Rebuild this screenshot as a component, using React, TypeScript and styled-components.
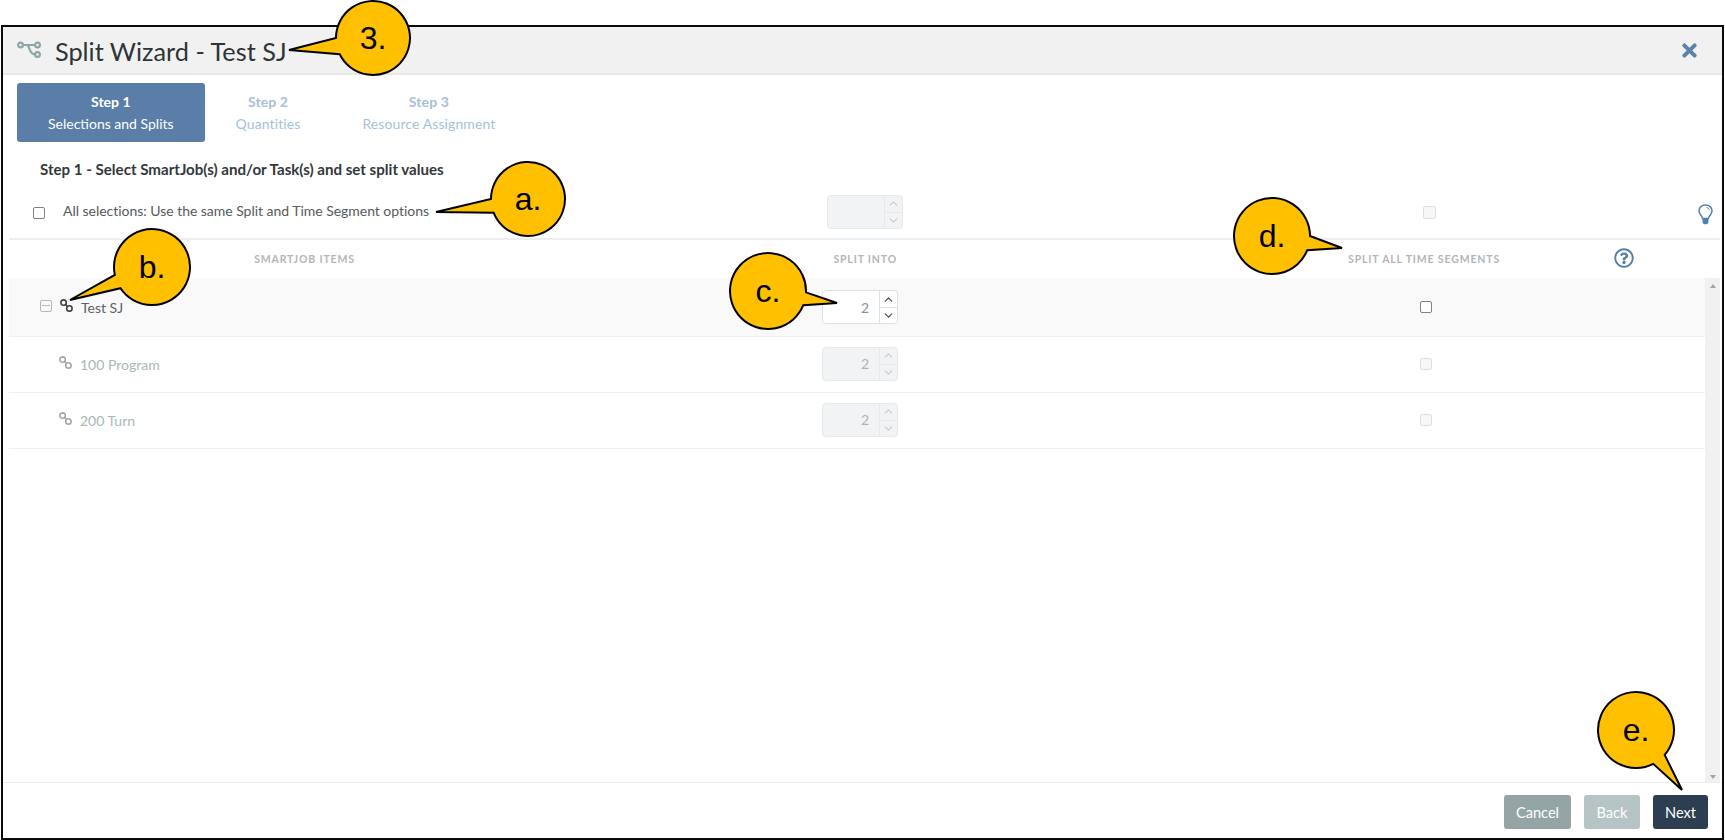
import React from "react";
import styled, { createGlobalStyle } from "styled-components";
import { FaTimes, FaRegQuestionCircle } from "react-icons/fa";
import { ChevronUp, ChevronDown } from "lucide-react";

const Global = createGlobalStyle`
  html, body { margin: 0; padding: 0; height: 840px; overflow: hidden; background: #fff; }
  body { font-family: Lato, "Liberation Sans", sans-serif; }
  * { box-sizing: border-box; }
`;

const Page = styled.div`
  position: relative;
  width: 1725px;
  height: 840px;
  padding: 25px 1px 0 1px;
`;

const Frame = styled.div`
  height: 815px;
  border: 2px solid #0a0a0a;
  display: flex;
  flex-direction: column;
  background: #fff;
`;

const Header = styled.header`
  height: 48px;
  flex: none;
  display: flex;
  align-items: center;
  padding: 0 22px 0 14px;
  background: #f1f1f1;
  border-bottom: 2px solid #e8e8e8;
`;

const Title = styled.h1`
  margin: 1px 0 0 14px;
  font-size: 25.3px;
  font-weight: 400;
  color: #2f3436;
  flex: 1;
`;

const CloseIcon = styled(FaTimes)`
  color: #5a82ab;
  font-size: 21px;
`;

const Steps = styled.nav`
  flex: none;
  display: flex;
  padding: 8px 0 0 14px;
`;

const Step = styled.div<{ $active?: boolean }>`
  height: 59px;
  padding: 0 31px;
  display: flex;
  flex-direction: column;
  align-items: center;
  justify-content: center;
  gap: 4px;
  border-radius: 3px;
  font-size: 14px;
  line-height: 18px;
  letter-spacing: ${(p) => (p.$active ? "0" : "0.1px")};
  background: ${(p) => (p.$active ? "#5a7ea8" : "transparent")};
  color: ${(p) => (p.$active ? "#ffffff" : "#a7bfd8")};
  b { font-weight: 700; }
`;

const Heading = styled.h2`
  flex: none;
  margin: 0;
  height: 43px;
  padding: 18px 0 0 37px;
  font-size: 15.1px;
  line-height: 18px;
  font-weight: 700;
  color: #33393b;
`;

const AllRow = styled.div`
  flex: none;
  height: 55px;
  margin-left: 6px;
  margin-right: 2px;
  border-bottom: 2px solid #eceff2;
  display: grid;
  grid-template-columns: 818px 76px 520px 13px 1fr;
  align-items: center;
`;

const AllLabel = styled.label`
  display: flex;
  align-items: center;
  gap: 18px;
  padding-left: 24px;
  font-size: 14px;
  letter-spacing: -0.03px;
  color: #555b5d;
  margin-top: -3px;
`;

const Bulb = styled.svg`
  justify-self: end;
  width: 15px;
  height: 21px;
  margin: 6px 7px 0 0;
`;

const TableHead = styled.div`
  flex: none;
  height: 38px;
  margin-left: 6px;
  display: grid;
  grid-template-columns: 591px 297px 603px 1fr;
  align-items: center;
`;

const HeadCell = styled.div<{ $align: "center" | "right" }>`
  text-align: ${(p) => p.$align};
  font-size: 10.5px;
  font-weight: 700;
  letter-spacing: 0.85px;
  text-transform: uppercase;
  color: #b3b6b8;
  margin-top: -1px;
`;

const HelpIcon = styled(FaRegQuestionCircle)`
  color: #4f7fb0;
  font-size: 20px;
  margin-left: 114px;
  margin-top: -2px;
`;

const Body = styled.div`
  flex: 1;
  min-height: 0;
  display: flex;
  margin-left: 6px;
  margin-right: 2px;
`;

const Rows = styled.div`
  flex: 1;
  min-width: 0;
`;

const Row = styled.div<{ $current?: boolean }>`
  height: ${(p) => (p.$current ? "59px" : "56px")};
  padding-bottom: ${(p) => (p.$current ? "0" : "2px")};
  display: grid;
  grid-template-columns: 813px 76px 522px 12px 1fr;
  align-items: center;
  background: ${(p) => (p.$current ? "#f9f9f9" : "#fff")};
  border-bottom: 1px solid #eef0f1;
`;

const TreeCell = styled.div<{ $child?: boolean }>`
  display: flex;
  align-items: center;
  margin-top: ${(p) => (p.$child ? "2px" : "0")};
  padding-left: ${(p) => (p.$child ? "50px" : "31px")};
  font-size: 14px;
  color: ${(p) => (p.$child ? "#a9b8b8" : "#5c6365")};
`;

const Collapse = styled.span`
  width: 12px;
  height: 12px;
  margin: -3px 8px 0 0;
  border: 1px solid #aebcbc;
  border-radius: 2px;
  display: flex;
  align-items: center;
  justify-content: center;
  &::before { content: ""; width: 8px; height: 1px; background: #aebcbc; }
`;

const LinkSvg = styled.svg<{ $child?: boolean }>`
  width: 13px;
  height: 13px;
  margin: -4px 8px 0 0;
  color: ${(p) => (p.$child ? "#a3a9aa" : "#3d4244")};
  flex: none;
`;

const StepperBox = styled.div<{ $disabled?: boolean }>`
  height: 34px;
  display: grid;
  grid-template-columns: 1fr 18px;
  border: 1px solid ${(p) => (p.$disabled ? "#e4e9ec" : "#dce1e5")};
  border-radius: 4px;
  overflow: hidden;
  background: ${(p) => (p.$disabled ? "#f1f3f5" : "#fff")};
`;

const StepperValue = styled.div<{ $disabled?: boolean }>`
  display: flex;
  align-items: center;
  justify-content: flex-end;
  padding-right: 10px;
  font-size: 14px;
  color: ${(p) => (p.$disabled ? "#a8b3b5" : "#8a9496")};
`;

const Arrows = styled.div<{ $disabled?: boolean }>`
  display: grid;
  grid-template-rows: 1fr 1fr;
  border-left: 1px solid ${(p) => (p.$disabled ? "#e4e9ec" : "#dce1e5")};
  color: ${(p) => (p.$disabled ? "#c3ccd0" : "#3d4446")};
  span {
    display: flex;
    align-items: center;
    justify-content: center;
  }
  span + span { border-top: 1px solid ${(p) => (p.$disabled ? "#e4e9ec" : "#dce1e5")}; }
`;

const Check = styled.span<{ $disabled?: boolean; $size?: number; $drop?: number }>`
  display: block;
  flex: none;
  width: ${(p) => p.$size ?? 12}px;
  height: ${(p) => p.$size ?? 12}px;
  margin-top: ${(p) => p.$drop ?? 0}px;
  border: 1px solid ${(p) => (p.$disabled ? "#dcdfe0" : "#7d8284")};
  border-radius: 2px;
  background: ${(p) => (p.$disabled ? "#f7f7f7" : "#fff")};
`;

const Scrollbar = styled.div`
  flex: none;
  width: 15px;
  background: #f1f1f1;
  display: flex;
  flex-direction: column;
  justify-content: space-between;
  align-items: center;
  padding: 6px 0 3px;
  &::before, &::after { content: ""; width: 0; height: 0; border-left: 3.5px solid transparent; border-right: 3.5px solid transparent; }
  &::before { border-bottom: 4px solid #a3a3a3; }
  &::after { border-top: 4px solid #a3a3a3; }
`;

const Footer = styled.footer`
  flex: none;
  height: 56px;
  border-top: 1px solid #ececec;
  display: flex;
  justify-content: flex-end;
  align-items: flex-start;
  gap: 13px;
  padding: 12px 14px 0 0;
`;

const Button = styled.button<{ $tone: string; $width: number }>`
  height: 34px;
  width: ${(p) => p.$width}px;
  border: 0;
  border-radius: 3px;
  background: ${(p) => p.$tone};
  color: #fff;
  font: 400 14.6px Lato, "Liberation Sans", sans-serif;
`;

const CalloutBox = styled.div<{ $x: number; $y: number; $r: number }>`
  position: absolute;
  left: ${(p) => p.$x - p.$r}px;
  top: ${(p) => p.$y - p.$r}px;
  width: ${(p) => p.$r * 2}px;
  height: ${(p) => p.$r * 2}px;
  display: flex;
  align-items: center;
  justify-content: center;
  font-family: "Liberation Sans", Arial, sans-serif;
  font-size: 32px;
  color: #000;
  svg { position: absolute; inset: 0; overflow: visible; }
  span { position: relative; }
`;

type CalloutProps = { label: string; cx: number; cy: number; r?: number; tip: [number, number]; a1: number; a2: number };

function Callout({ label, cx, cy, r = 37, tip, a1, a2 }: CalloutProps) {
  const pt = (a: number) => [r + r * Math.cos((a * Math.PI) / 180), r + r * Math.sin((a * Math.PI) / 180)];
  const [x1, y1] = pt(a1);
  const [x2, y2] = pt(a2);
  const d = `M${x1} ${y1} A${r} ${r} 0 1 1 ${x2} ${y2} L${tip[0] - cx + r} ${tip[1] - cy + r} Z`;
  return (
    <CalloutBox $x={cx} $y={cy} $r={r}>
      <svg width={r * 2} height={r * 2}>
        <path d={d} fill="#ffc000" stroke="#000" strokeWidth="2" strokeLinejoin="miter" />
      </svg>
      <span>{label}</span>
    </CalloutBox>
  );
}

function LinkIcon({ child }: { child?: boolean }) {
  return (
    <LinkSvg $child={child} viewBox="0 0 13 13" fill="none" stroke="currentColor" strokeWidth="1.6">
      <circle cx="3.6" cy="3.6" r="2.7" />
      <circle cx="9.4" cy="9.4" r="2.7" />
      <path d="M5.5 5.5l2 2" />
    </LinkSvg>
  );
}

function Stepper({ value, disabled }: { value?: string; disabled?: boolean }) {
  return (
    <StepperBox $disabled={disabled}>
      <StepperValue $disabled={disabled}>{value}</StepperValue>
      <Arrows $disabled={disabled}>
        <span><ChevronUp size={13} strokeWidth={2} /></span>
        <span><ChevronDown size={13} strokeWidth={2} /></span>
      </Arrows>
    </StepperBox>
  );
}

const SplitSvg = styled.svg`
  width: 24px;
  height: 18px;
  flex: none;
  color: #8fa6a6;
`;

export default function App() {
  return (
    <Page>
      <Global />
      <Frame>
        <Header>
          <SplitSvg viewBox="0 0 24 18" fill="none" stroke="currentColor" strokeWidth="2.2">
            <circle cx="3.5" cy="4" r="2.4" />
            <circle cx="20.5" cy="4" r="2.4" />
            <circle cx="20.5" cy="13.5" r="2.4" />
            <path d="M6 4h12M10 4c2.5 0 2 9.5 8 9.5" />
          </SplitSvg>
          <Title>Split Wizard - Test SJ</Title>
          <CloseIcon />
        </Header>
        <Steps>
          <Step $active><b>Step 1</b><span>Selections and Splits</span></Step>
          <Step><b>Step 2</b><span>Quantities</span></Step>
          <Step><b>Step 3</b><span>Resource Assignment</span></Step>
        </Steps>
        <Heading>Step 1 - Select SmartJob(s) and/or Task(s) and set split values</Heading>
        <AllRow>
          <AllLabel><Check $drop={6} />All selections: Use the same Split and Time Segment options</AllLabel>
          <Stepper disabled />
          <span />
          <Check $disabled $size={13} $drop={1} />
          <Bulb viewBox="0 0 15 21" fill="none" stroke="#4f7fb0" strokeWidth="1.5">
            <path d="M4.6 14.5C4.2 11.5 1 10.5 1 6.8 1 3.4 3.9 1 7.5 1S14 3.4 14 6.8c0 3.7-3.2 4.7-3.6 7.7z" />
            <path d="M4.6 15h5.8v3.2c0 1.4-1.4 2-2.9 2s-2.9-.6-2.9-2z" fill="#4f7fb0" stroke="none" />
            <path d="M8.5 3.5c1.4.3 2.4 1.1 2.8 2.3" strokeWidth="1" />
          </Bulb>
        </AllRow>
        <TableHead>
          <HeadCell $align="center">SmartJob Items</HeadCell>
          <HeadCell $align="right">Split Into</HeadCell>
          <HeadCell $align="right">Split All Time Segments</HeadCell>
          <HelpIcon />
        </TableHead>
        <Body>
          <Rows>
            <Row $current>
              <TreeCell><Collapse /><LinkIcon />Test SJ</TreeCell>
              <Stepper value="2" />
              <span />
              <Check />
            </Row>
            <Row>
              <TreeCell $child><LinkIcon child />100 Program</TreeCell>
              <Stepper value="2" disabled />
              <span />
              <Check $disabled />
            </Row>
            <Row>
              <TreeCell $child><LinkIcon child />200 Turn</TreeCell>
              <Stepper value="2" disabled />
              <span />
              <Check $disabled />
            </Row>
          </Rows>
          <Scrollbar />
        </Body>
        <Footer>
          <Button $tone="#95a5a6" $width={67}>Cancel</Button>
          <Button $tone="#b6c4c5" $width={56}>Back</Button>
          <Button $tone="#2c3e50" $width={55}>Next</Button>
        </Footer>
      </Frame>
      <Callout label="3." cx={373} cy={38} tip={[289, 50]} a1={180} a2={154} />
      <Callout label="a." cx={528} cy={199} tip={[436, 212]} a1={180} a2={158} />
      <Callout label="b." cx={152} cy={267} r={38} tip={[70, 300]} a1={168} a2={146} />
      <Callout label="c." cx={768} cy={291} r={38} tip={[837, 303]} a1={22} a2={2} />
      <Callout label="d." cx={1272} cy={236} r={38} tip={[1342, 248]} a1={22} a2={0} />
      <Callout label="e." cx={1636} cy={730} r={38} tip={[1682, 790]} a1={63} a2={41} />
    </Page>
  );
}
